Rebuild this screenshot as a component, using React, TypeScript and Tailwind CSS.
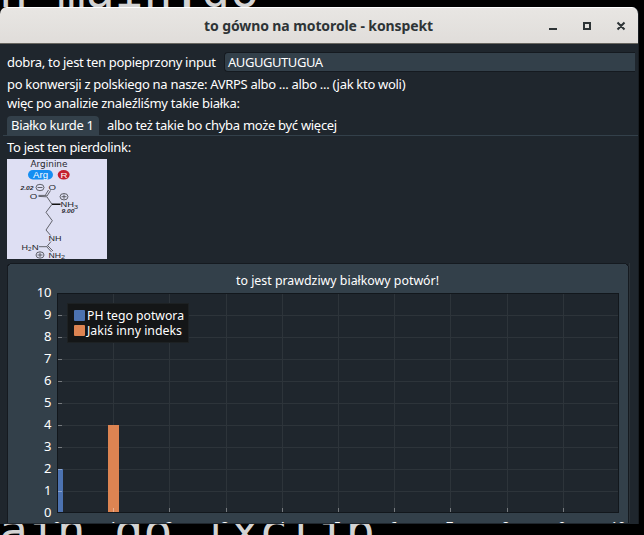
import React from 'react';

function Molecule() {
  return (
    <svg width="100" height="100" viewBox="0 0 100 100" className="block bg-[#dedff3]" fontFamily="'Liberation Sans', sans-serif" fill="#26272d">
      <text x="23.5" y="7.5" fontSize="8.3" textLength="37" lengthAdjust="spacingAndGlyphs" fontFamily="'DejaVu Sans', sans-serif">Arginine</text>
      <rect x="21" y="11" width="25" height="9.5" rx="4.8" fill="#158ef2" />
      <text x="26" y="18.6" fontSize="8.5" fill="#fff" textLength="15" lengthAdjust="spacingAndGlyphs">Arg</text>
      <ellipse cx="56.7" cy="15.8" rx="6" ry="4.8" fill="#c41f30" />
      <text x="53.4" y="18.5" fontSize="7.5" fill="#fff" textLength="7" lengthAdjust="spacingAndGlyphs">R</text>
      <g fontSize="8">
        <text x="13.5" y="30.5" fontSize="5" fontStyle="italic" fontWeight="bold" textLength="13" lengthAdjust="spacingAndGlyphs">2.02</text>
        <text x="41.5" y="31" textLength="7.5" lengthAdjust="spacingAndGlyphs">O</text>
        <text x="22.8" y="39.7" textLength="7.5" lengthAdjust="spacingAndGlyphs">O</text>
        <text x="53.5" y="48.2" textLength="13.5" lengthAdjust="spacingAndGlyphs">NH</text>
        <text x="67" y="50" fontSize="5.5" textLength="4" lengthAdjust="spacingAndGlyphs">3</text>
        <text x="54.5" y="53.5" fontSize="4.5" fontStyle="italic" fontWeight="bold" textLength="13" lengthAdjust="spacingAndGlyphs">9.00</text>
        <text x="41.5" y="82" textLength="13" lengthAdjust="spacingAndGlyphs">NH</text>
        <text x="14.5" y="90.7" textLength="6.5" lengthAdjust="spacingAndGlyphs">H</text>
        <text x="21" y="92.3" fontSize="5.5" textLength="3.500" lengthAdjust="spacingAndGlyphs">2</text>
        <text x="24.7" y="90.7" textLength="7" lengthAdjust="spacingAndGlyphs">N</text>
        <text x="41.5" y="98.6" textLength="12.5" lengthAdjust="spacingAndGlyphs">NH</text>
        <text x="54" y="99.6" fontSize="5.5" textLength="4" lengthAdjust="spacingAndGlyphs">2</text>
      </g>
      <g fill="none" stroke="#4a4b52" strokeWidth="0.85">
        <ellipse cx="33" cy="28.5" rx="4" ry="3.2" />
        <path d="M30.500 28.500h5" />
        <ellipse cx="57" cy="37.7" rx="4" ry="3.2" />
        <path d="M54.500 37.700h5M57 35.500v4.400" />
        <ellipse cx="33" cy="96" rx="4" ry="3.2" />
        <path d="M30.500 96h5M33 93.700v4.600" />
        <path d="M43.500 31.500L40 37M41.500 31L38.500 35.800M39.700 36.400L31.500 36.400M39.700 37.800L31.500 37.400M39.700 37.500L45 45.300L39 53.300L45.300 61.700L39 71L43.700 76.500M44 82.500L39.700 87.700L32 87.700M39.700 87.700L44.500 93M41 87L46 92" />
        <path d="M45 45.300h8.500" stroke="#111" strokeWidth="1.500" />
      </g>
    </svg>
  );
}

const vLines = [113, 169, 226, 282, 338, 394, 450, 507, 563];
const hLines = [315, 337, 359, 381, 403, 425, 447, 469, 491];
const ticks = [0, 1, 2, 3, 4, 5, 6, 7, 8, 9, 10];

function Chart() {
  return (
    <svg width="623" height="260" viewBox="7 263 623 260" className="block font-['Noto_Sans',sans-serif]" fontSize="13" fill="#fff">
      <g shapeRendering="crispEdges">
        <path d="M7 540V268q0-5 5-5h612q5 0 5 5v272z" fill="#151a20" />
        <path d="M629.5 263v260" stroke="#2b3238" />
        <path d="M8 540V268q0-4 4-4h612q4 0 4 4v272z" fill="#33404a" />
        <rect x="57" y="293" width="562" height="220" fill="#12171c" />
        <rect x="58" y="294" width="560" height="218" fill="#1f262d" />
        {vLines.map((x) => <rect key={x} x={x} y="294" width="1" height="218" fill="#2d343a" />)}
        {hLines.map((y) => <rect key={y} x="58" y={y} width="560" height="1" fill="#2d343a" />)}
        <rect x="58" y="469" width="5" height="43" fill="#4c72b0" />
        <rect x="108" y="425" width="11" height="87" fill="#dd8452" />
        {vLines.map((x) => <rect key={x} x={x} y="508" width="1" height="4" fill="#fff" fillOpacity=".35" />)}
        {hLines.map((y) => <rect key={y} x="58" y={y} width="4" height="1" fill="#fff" fillOpacity=".35" />)}
        <rect x="67" y="303" width="122" height="40" fill="#1d2123" />
        <rect x="68" y="304" width="120" height="38" fill="#141617" />
      </g>
      <rect x="74" y="310" width="11" height="11" rx="1" fill="#4c72b0" />
      <rect x="74" y="325" width="11" height="11" rx="1" fill="#dd8452" />
      <text x="87" y="320" textLength="97" lengthAdjust="spacingAndGlyphs">PH tego potwora</text>
      <text x="87" y="335" textLength="95" lengthAdjust="spacingAndGlyphs">Jakiś inny indeks</text>
      <text x="236" y="285" textLength="203" lengthAdjust="spacingAndGlyphs">to jest prawdziwy białkowy potwór!</text>
      {ticks.map((n) => (
        <text key={n} x="51.5" y={517 - n * 22} textAnchor="end">{n}</text>
      ))}
      {ticks.map((n) => (
        <text key={n} x={57 + n * 56.1} y="530.5" textAnchor="middle">{n}</text>
      ))}
    </svg>
  );
}

export default function App() {
  return (
    <div className="w-[644px] h-[535px] bg-black overflow-hidden flex flex-col text-[13px] tracking-[-0.3px] text-white whitespace-pre font-['Noto_Sans','Open_Sans',sans-serif]">
      <div className="h-[7px] shrink-0 overflow-hidden">
        <svg width="644" height="7" className="block tracking-normal" fontFamily="'DejaVu Sans Mono', monospace" fontSize="48" fill="#d3d3d3">
          <text x="-1" y="7">n main.go</text>
        </svg>
      </div>
      <div className="w-[639px] h-[517px] flex flex-col shrink-0 overflow-hidden bg-[#1f262d] rounded-t-[7px] border-r border-[#171c21]">
        <header className="h-[37px] w-[639px] shrink-0 flex items-center bg-gradient-to-b from-[#e8e6e3] to-[#e0ddda] border-t border-b border-t-white border-b-[#67655f] text-[#2e3436]">
          <span className="ml-[204px] w-[229px] text-[14px] font-bold tracking-[-0.1px]">to gówno na motorole - konspekt</span>
          <svg width="90" height="14" viewBox="545 18 90 14" className="ml-auto mr-[4px]" fill="none" stroke="#2e3436" strokeWidth="2">
            <path d="M549 28h8M584 22h6v6h-6zM617.500 21.500l7 7M624.500 21.500l-7 7" />
          </svg>
        </header>
        <div className="mt-[8px] h-[20px] shrink-0 flex items-center pl-[7px]">
          <span className="w-[217px] pt-px">dobra, to jest ten popieprzony input</span>
          <div className="w-[411px] h-[20px] bg-[#33404a] border-y border-l border-[#151a20] rounded-l-[4px] pl-[3px] pt-px flex items-center tracking-[-0.45px]">AUGUGUTUGUA</div>
        </div>
        <div className="pl-[7px] mt-[3px] h-[19px] leading-[19px] shrink-0">po konwersji z polskiego na nasze: AVRPS albo ... albo ... (jak kto woli)</div>
        <div className="pl-[7px] h-[19px] leading-[19px] shrink-0">więc po analizie znaleźliśmy takie białka:</div>
        <div className="ml-[3px] pl-[4px] mt-[3px] h-[20px] shrink-0 flex border-b border-[#33404a]">
          <div className="w-[92px] h-[19px] leading-[19px] pl-[4px] rounded-t-[4px] bg-[#33404a]">Białko kurde 1</div>
          <span className="ml-[8px] leading-[19px]">albo też takie bo chyba może być więcej</span>
        </div>
        <div className="pl-[7px] mt-[2px] h-[21px] leading-[19px] shrink-0">To jest ten pierdolink:</div>
        <div className="pl-[7px] shrink-0 tracking-normal"><Molecule /></div>
        <div className="pl-[7px] mt-[4px] shrink-0 tracking-normal"><Chart /></div>
      </div>
      <svg width="644" height="11" className="block shrink-0 tracking-normal" fontFamily="'DejaVu Sans Mono', monospace" fontSize="48" fill="#d3d3d3">
        <text x="-1" y="23">ain go |xclip</text>
      </svg>
    </div>
  );
}
